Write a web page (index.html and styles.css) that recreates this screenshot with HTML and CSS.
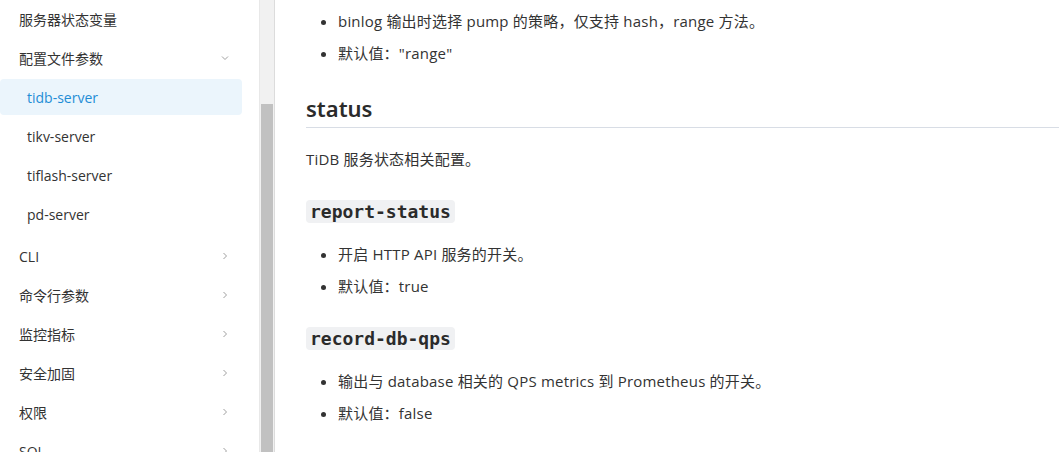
FILE: index.html
```html
<!DOCTYPE html>
<html lang="zh-CN">
<head>
    <meta charset="UTF-8">
    <meta name="viewport" content="width=device-width, initial-scale=1.0">
    <title>tidb-server 配置文件参数</title>
    <link rel="stylesheet" href="styles.css">
</head>
<body>
    <div class="page">
        <aside class="sidebar">
            <nav class="nav">
                <div class="nav-item">服务器状态变量</div>
                <div class="nav-item">配置文件参数
                    <svg class="chevron" width="10" height="10" viewBox="0 0 10 10"><polyline points="2,3.5 5,6.5 8,3.5" /></svg>
                </div>
                <div class="nav-group">
                    <div class="nav-item child active">tidb-server</div>
                    <div class="nav-item child">tikv-server</div>
                    <div class="nav-item child">tiflash-server</div>
                    <div class="nav-item child">pd-server</div>
                </div>
                <div class="nav-item">CLI
                    <svg class="chevron" width="10" height="10" viewBox="0 0 10 10"><polyline points="3.5,2 6.5,5 3.5,8" /></svg>
                </div>
                <div class="nav-item">命令行参数
                    <svg class="chevron" width="10" height="10" viewBox="0 0 10 10"><polyline points="3.5,2 6.5,5 3.5,8" /></svg>
                </div>
                <div class="nav-item">监控指标
                    <svg class="chevron" width="10" height="10" viewBox="0 0 10 10"><polyline points="3.5,2 6.5,5 3.5,8" /></svg>
                </div>
                <div class="nav-item">安全加固
                    <svg class="chevron" width="10" height="10" viewBox="0 0 10 10"><polyline points="3.5,2 6.5,5 3.5,8" /></svg>
                </div>
                <div class="nav-item">权限
                    <svg class="chevron" width="10" height="10" viewBox="0 0 10 10"><polyline points="3.5,2 6.5,5 3.5,8" /></svg>
                </div>
                <div class="nav-item">SQL
                    <svg class="chevron" width="10" height="10" viewBox="0 0 10 10"><polyline points="3.5,2 6.5,5 3.5,8" /></svg>
                </div>
            </nav>
            <div class="scrollbar"><div class="thumb"></div></div>
        </aside>

        <main class="content">
            <ul>
                <li>binlog 输出时选择 pump 的策略，仅支持 hash，range 方法。</li>
                <li>默认值："range"</li>
            </ul>

            <h2>status</h2>
            <p>TiDB 服务状态相关配置。</p>

            <h3><code>report-status</code></h3>
            <ul>
                <li>开启 HTTP API 服务的开关。</li>
                <li>默认值：true</li>
            </ul>

            <h3><code>record-db-qps</code></h3>
            <ul>
                <li>输出与 database 相关的 QPS metrics 到 Prometheus 的开关。</li>
                <li>默认值：false</li>
            </ul>
        </main>
    </div>
</body>
</html>
```

FILE: styles.css
```css
body {
    margin: 0;
    padding: 0;
    background-color: #fff;
    font-family: "Open Sans", "Noto Sans CJK SC", sans-serif;
    font-size: 14px;
    color: #333;
}
.page {
    display: flex;
    height: 452px;
    overflow: hidden;
}
.sidebar {
    display: flex;
    flex: 0 0 275px;
}
.nav {
    flex: 1;
    padding-top: 1px;
    overflow: hidden;
}
.nav-item {
    display: flex;
    align-items: center;
    justify-content: space-between;
    height: 36px;
    margin-right: 17px;
    margin-bottom: 3px;
    padding: 0 12px 0 19px;
    border-radius: 4px;
    color: #333;
}
.nav-group {
    margin-bottom: 6px;
}
.nav-item.child {
    padding-left: 27px;
}
.nav-item.active {
    background-color: #ebf5fc;
    color: #1f8dd6;
}
.chevron {
    fill: none;
    stroke: #a0a0a0;
    stroke-width: 1;
}
.scrollbar {
    flex: 0 0 16px;
    background-color: #f1f1f1;
    border-left: 1px solid #e8e8e8;
    border-right: 1px solid #dcdcdc;
    box-sizing: border-box;
}
.thumb {
    margin: 104px 1px 0 1px;
    height: 400px;
    background-color: #c1c1c1;
}
.content {
    flex: 1;
    padding: 9px 0 0 31px;
    font-size: 15px;
    letter-spacing: 0.2px;
}
ul {
    margin: 0;
    padding-left: 32px;
}
li {
    line-height: 24px;
    margin-bottom: 8px;
}
li:last-child {
    margin-bottom: 0;
}
h2 {
    margin: 27px 0 0;
    padding-bottom: 3px;
    font-family: "Noto Sans", "Noto Sans CJK SC", sans-serif;
    font-size: 22px;
    font-weight: 600;
    line-height: 32px;
    letter-spacing: 0;
    color: #2b2b2b;
    border-bottom: 1px solid #d8dde5;
}
p {
    margin: 19px 0 0;
    line-height: 24px;
}
h3 {
    margin: 25px 0 15px;
    font-size: 18px;
    line-height: 30px;
    letter-spacing: 0;
}
code {
    font-family: "DejaVu Sans Mono", monospace;
    font-size: 18px;
    font-weight: bold;
    padding: 1px 4px;
    background-color: #f0f1f3;
    border-radius: 4px;
    color: #2b2b2b;
}
```
